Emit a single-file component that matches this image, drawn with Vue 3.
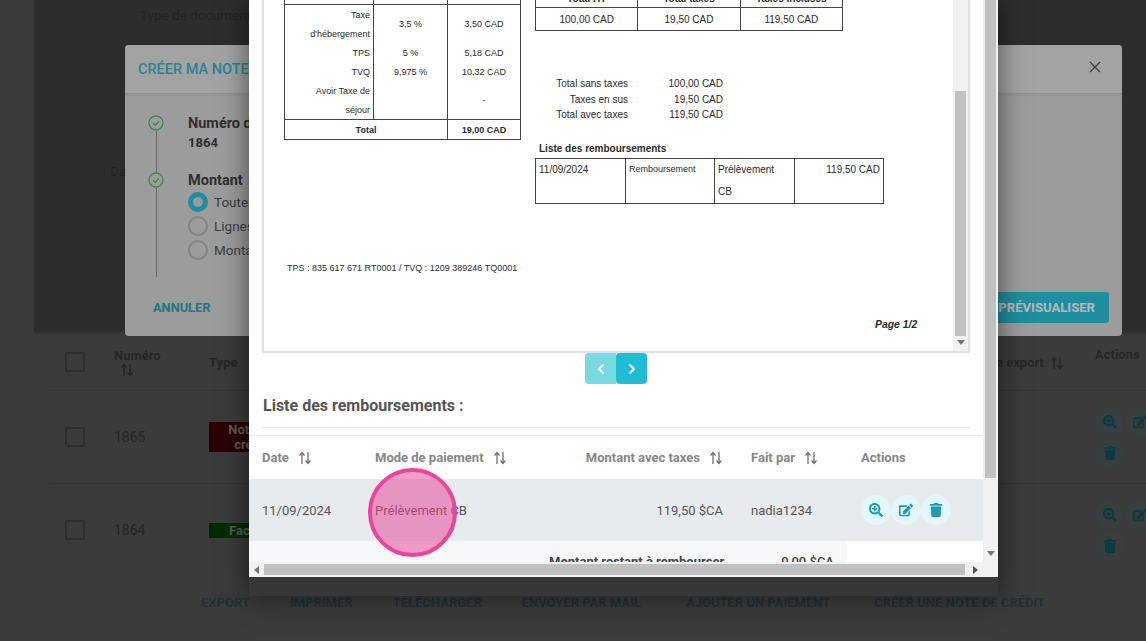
<script setup>
const taxRows = [
  { label: 'Taxe', rate: '3,5 %', amount: '3,50 CAD', span: true, label2: "d'hébergement" },
  { label: 'TPS', rate: '5 %', amount: '5,18 CAD' },
  { label: 'TVQ', rate: '9,975 %', amount: '10,32 CAD' },
  { label: 'Avoir Taxe de', label2: 'séjour', rate: '', amount: '-', span: true }
]
const totals = [
  ['Total sans taxes', '100,00 CAD'],
  ['Taxes en sus', '19,50 CAD'],
  ['Total avec taxes', '119,50 CAD']
]
const bgActions = ['EXPORT', 'IMPRIMER', 'TÉLÉCHARGER', 'ENVOYER PAR MAIL', 'AJOUTER UN PAIEMENT', 'CRÉER UNE NOTE DE CRÉDIT']
const radios = ['Toutes', 'Lignes', 'Montant']
const paths = {
  zoom: 'M304 192v32c0 6.6-5.4 12-12 12h-56v56c0 6.6-5.4 12-12 12h-32c-6.6 0-12-5.4-12-12v-56h-56c-6.6 0-12-5.4-12-12v-32c0-6.6 5.4-12 12-12h56v-56c0-6.6 5.4-12 12-12h32c6.6 0 12 5.4 12 12v56h56c6.6 0 12 5.4 12 12zm201 284.7L476.7 505c-9.4 9.4-24.6 9.4-33.9 0L343 405.3c-4.5-4.5-7-10.6-7-17V372c-35.3 27.6-79.7 44-128 44C93.1 416 0 322.9 0 208S93.1 0 208 0s208 93.1 208 208c0 48.3-16.4 92.7-44 128h16.3c6.4 0 12.5 2.5 17 7l99.7 99.7c9.3 9.4 9.3 24.6 0 34zM344 208c0-75.2-60.8-136-136-136S72 132.8 72 208s60.8 136 136 136 136-60.8 136-136z',
  edit: 'M402.6 83.2l90.2 90.2c3.8 3.8 3.8 10 0 13.8L274.4 405.6l-92.8 10.3c-12.4 1.4-22.9-9.1-21.5-21.5l10.3-92.8L388.8 83.2c3.8-3.8 10-3.8 13.8 0zm162-22.9l-48.8-48.8c-15.2-15.2-39.9-15.2-55.2 0l-35.4 35.4c-3.8 3.8-3.8 10 0 13.8l90.2 90.2c3.8 3.8 10 3.8 13.8 0l35.4-35.4c15.2-15.3 15.2-40 0-55.2zM384 346.2V448H64V128h229.8c3.2 0 6.2-1.3 8.5-3.5l40-40c7.6-7.6 2.2-20.5-8.5-20.5H48C21.5 64 0 85.5 0 112v352c0 26.5 21.5 48 48 48h352c26.5 0 48-21.5 48-48V306.2c0-10.7-12.9-16-20.5-8.5l-40 40c-2.2 2.3-3.5 5.3-3.5 8.5z',
  trash: 'M432 32H312l-9.4-18.7A24 24 0 0 0 281.1 0H166.8a23.72 23.72 0 0 0-21.4 13.3L136 32H16A16 16 0 0 0 0 48v32a16 16 0 0 0 16 16h416a16 16 0 0 0 16-16V48a16 16 0 0 0-16-16zM53.2 467a48 48 0 0 0 47.9 45h245.8a48 48 0 0 0 47.9-45L416 128H32z'
}
const actionIcons = [
  { name: 'zoom', box: '0 0 512 512' },
  { name: 'edit', box: '0 0 576 512' },
  { name: 'trash', box: '0 0 448 512' }
]
</script>

<template>
  <div class="screen">
    <!-- dimmed page -->
    <div class="page">
      <div class="page-top">
        <div class="doc-type">Type de document</div>
        <div class="doc-date">Date</div>
      </div>
      <div class="bg-row bg-head">
        <span class="bg-check"></span>
        <div class="bg-num"><b>Numéro</b>
          <svg class="sort dark" viewBox="0 0 14 14"><path d="M4 13V2M1.5 4.5 4 1.5l2.5 3M10 1v11M7.5 9.5l2.5 3 2.5-3" /></svg>
        </div>
        <div class="bg-type"><b>Type</b></div>
        <div class="bg-export"><b>Date export</b>
          <svg class="sort dark" viewBox="0 0 14 14"><path d="M4 13V2M1.5 4.5 4 1.5l2.5 3M10 1v11M7.5 9.5l2.5 3 2.5-3" /></svg>
        </div>
        <div class="bg-act-head"><b>Actions</b></div>
      </div>
      <div class="bg-row bg-line">
        <span class="bg-check"></span>
        <div class="bg-num">1865</div>
        <div class="bg-type"><span class="tag tag-red">Note de<br />crédit</span></div>
        <div class="bg-export"></div>
        <div class="bg-actions">
          <span v-for="i in actionIcons" :key="i.name" class="bg-icon"><svg :viewBox="i.box"><path :d="paths[i.name]" /></svg></span>
        </div>
      </div>
      <div class="bg-row bg-line">
        <span class="bg-check"></span>
        <div class="bg-num">1864</div>
        <div class="bg-type"><span class="tag tag-green">Facture</span></div>
        <div class="bg-export"></div>
        <div class="bg-actions">
          <span v-for="i in actionIcons" :key="i.name" class="bg-icon"><svg :viewBox="i.box"><path :d="paths[i.name]" /></svg></span>
        </div>
      </div>
      <div class="bg-buttons">
        <span v-for="a in bgActions" :key="a">{{ a }}</span>
      </div>
    </div>

    <!-- first dialog -->
    <section class="dialog">
      <header class="dialog-head">
        <span class="dialog-title">CRÉER MA NOTE DE CRÉDIT</span>
        <svg class="close" viewBox="0 0 12 12"><path d="M1 1l10 10M11 1 1 11" /></svg>
      </header>
      <div class="dialog-body">
        <div class="step">
          <div class="step-rail">
            <svg class="step-check" viewBox="0 0 16 16"><circle cx="8" cy="8" r="7" /><path d="M5 8.2l2.1 2.1L11 6.2" /></svg>
            <span class="rail-line"></span>
          </div>
          <div>
            <div class="step-title">Numéro de la note</div>
            <div class="step-value">1864</div>
          </div>
        </div>
        <div class="step step-last">
          <div class="step-rail">
            <svg class="step-check" viewBox="0 0 16 16"><circle cx="8" cy="8" r="7" /><path d="M5 8.2l2.1 2.1L11 6.2" /></svg>
            <span class="rail-line"></span>
          </div>
          <div>
            <div class="step-title">Montant</div>
            <div v-for="(r, i) in radios" :key="r" class="radio-row">
              <span class="radio" :class="{ on: i === 0 }"></span>{{ r }}
            </div>
          </div>
        </div>
      </div>
      <footer class="dialog-foot">
        <span class="cancel">ANNULER</span>
        <span class="preview">PRÉVISUALISER</span>
      </footer>
    </section>

    <!-- front modal -->
    <section class="modal">
      <div class="modal-main">
        <div class="modal-content">
          <div class="scroll-view">
            <div class="frame">
              <div class="pdf">
                <div class="pdf-left">
                  <table class="tbl tax">
                    <tbody>
                      <tr class="clip-row"><td></td><td></td><td></td></tr>
                      <template v-for="r in taxRows" :key="r.label">
                        <template v-if="r.span">
                          <tr>
                            <td class="lbl">{{ r.label }}</td>
                            <td class="ctr" rowspan="2">{{ r.rate }}</td>
                            <td class="ctr" rowspan="2">{{ r.amount }}</td>
                          </tr>
                          <tr><td class="lbl">{{ r.label2 }}</td></tr>
                        </template>
                        <tr v-else>
                          <td class="lbl">{{ r.label }}</td>
                          <td class="ctr">{{ r.rate }}</td>
                          <td class="ctr">{{ r.amount }}</td>
                        </tr>
                      </template>
                      <tr class="total-row">
                        <td colspan="2" class="ctr"><b>Total</b></td>
                        <td class="ctr"><b>19,00 CAD</b></td>
                      </tr>
                    </tbody>
                  </table>
                  <div class="tax-ids">TPS : 835 617 671 RT0001 / TVQ : 1209 389246 TQ0001</div>
                </div>
                <div class="pdf-right">
                  <table class="tbl sum">
                    <tbody>
                      <tr class="sum-head"><td><b>Total HT</b></td><td><b>Total taxes</b></td><td><b>Taxes incluses</b></td></tr>
                      <tr class="sum-row"><td>100,00 CAD</td><td>19,50 CAD</td><td>119,50 CAD</td></tr>
                    </tbody>
                  </table>
                  <div class="totals">
                    <template v-for="t in totals" :key="t[0]">
                      <span>{{ t[0] }}</span><span>{{ t[1] }}</span>
                    </template>
                  </div>
                  <div class="pdf-h">Liste des remboursements</div>
                  <table class="tbl refunds">
                    <tbody>
                      <tr>
                        <td>11/09/2024</td>
                        <td class="small">Remboursement</td>
                        <td>Prélèvement<br />CB</td>
                        <td class="right">119,50 CAD</td>
                      </tr>
                    </tbody>
                  </table>
                  <div class="page-no">Page 1/2</div>
                </div>
              </div>
              <div class="pdf-scroll">
                <span class="pdf-thumb"></span>
                <span class="arrow down"></span>
              </div>
            </div>
            <div class="pager">
              <span class="pg pg-off"><svg viewBox="0 0 8 12"><path d="M6 2 2 6l4 4" /></svg></span>
              <span class="pg pg-on"><svg viewBox="0 0 8 12"><path d="M2 2l4 4-4 4" /></svg></span>
            </div>
            <h2 class="list-title">Liste des remboursements :</h2>
            <div class="list-rule"></div>
            <div class="grid thead">
              <div class="c-date">Date<svg class="sort" viewBox="0 0 14 14"><path d="M4 13V2M1.5 4.5 4 1.5l2.5 3M10 1v11M7.5 9.5l2.5 3 2.5-3" /></svg></div>
              <div>Mode de paiement<svg class="sort" viewBox="0 0 14 14"><path d="M4 13V2M1.5 4.5 4 1.5l2.5 3M10 1v11M7.5 9.5l2.5 3 2.5-3" /></svg></div>
              <div class="c-amount">Montant avec taxes<svg class="sort" viewBox="0 0 14 14"><path d="M4 13V2M1.5 4.5 4 1.5l2.5 3M10 1v11M7.5 9.5l2.5 3 2.5-3" /></svg></div>
              <div>Fait par<svg class="sort" viewBox="0 0 14 14"><path d="M4 13V2M1.5 4.5 4 1.5l2.5 3M10 1v11M7.5 9.5l2.5 3 2.5-3" /></svg></div>
              <div>Actions</div>
            </div>
            <div class="grid tbody">
              <div class="c-date">11/09/2024</div>
              <div>Prélèvement CB</div>
              <div class="c-amount">119,50 $CA</div>
              <div>nadia1234</div>
              <div class="acts">
                <span v-for="i in actionIcons" :key="i.name" class="act"><svg :viewBox="i.box"><path :d="paths[i.name]" /></svg></span>
              </div>
            </div>
            <div class="summary">
              <span>Montant restant à rembourser</span>
              <span>0,00 $CA</span>
            </div>
          </div>
          <div class="hbar">
            <span class="arrow left"></span>
            <span class="hthumb"></span>
            <span class="arrow right"></span>
          </div>
        </div>
        <div class="vbar">
          <span class="vthumb"></span>
          <span class="arrow down"></span>
        </div>
      </div>
    </section>

    <div class="spot"></div>
  </div>
</template>

<style>
html, body { margin: 0; background: #3a3a3a; }
</style>

<style scoped>
.screen {
  position: relative;
  width: 1146px;
  height: 641px;
  overflow: hidden;
  background: #3b3b3b;
  font-family: Roboto, "Liberation Sans", sans-serif;
  color: #222;
}
.page-top {
  height: 334px;
  margin-left: 34px;
  padding: 7px 0 0 106px;
  box-sizing: border-box;
  background: #2d2d2d;
  color: #232323;
  font-size: 13.5px;
  border-bottom: 2px solid #333;
}
.doc-type { line-height: 16px; }
.doc-date { margin: 140px 0 0 -30px; line-height: 16px; }
.bg-row {
  display: grid;
  grid-template-columns: 49px 95px 1fr 200px 51px;
  align-items: center;
  margin-left: 50px;
  padding-left: 15px;
  color: #262626;
  font-size: 14px;
}
.bg-head { height: 56px; }
.bg-line { height: 92px; border-top: 1px solid #353535; }
.bg-check {
  width: 16px;
  height: 16px;
  border: 2px solid #2e2e2e;
  border-radius: 2px;
}
.bg-num b, .bg-type b, .bg-export b, .bg-act-head b { font-weight: 700; font-size: 13px; }
.bg-num b { display: block; }
.sort.dark { stroke: #262626; margin-left: 6px; }
.bg-head .bg-num .sort { display: block; }
.bg-export { justify-self: end; padding-right: 31px; white-space: nowrap; }
.bg-act-head { align-self: start; padding-top: 12px; }
.tag {
  display: inline-block;
  width: 84px;
  text-align: center;
  font-size: 13px;
  font-weight: 700;
  line-height: 15px;
  color: #5b5b5b;
  vertical-align: middle;
}
.tag-red { background: #2c0000; }
.tag-green { background: #012c01; }
.bg-actions { display: flex; flex-wrap: wrap; width: 62px; gap: 1px 0; }
.bg-icon {
  width: 30px;
  height: 30px;
  display: flex;
  align-items: center;
  justify-content: center;
  border-radius: 50%;
  background: #383d3e;
}
.bg-icon svg { width: 14px; height: 14px; fill: #0c3a42; }
.bg-buttons {
  display: flex;
  gap: 40px;
  padding: 19px 0 0 201px;
  font-size: 13px;
  font-weight: 700;
  color: #232f36;
  white-space: nowrap;
}
.bg-buttons span:nth-child(5) { margin-left: 5px; }
.bg-buttons span:nth-child(6) { margin-left: 4px; }

.dialog {
  position: absolute;
  left: 125px;
  top: 45px;
  width: 997px;
  height: 291px;
  display: flex;
  flex-direction: column;
  border-radius: 4px;
  background: #9c9c9c;
  overflow: hidden;
}
.dialog-head {
  height: 48px;
  flex: none;
  display: flex;
  align-items: center;
  justify-content: space-between;
  padding: 0 21px 4px 13px;
  box-sizing: border-box;
  background: #a3a3a3;
  box-shadow: 0 1px 3px rgba(0, 0, 0, .12);
}
.dialog-title { font-size: 14.5px; font-weight: 500; color: #2a8391; margin-top: 4px; }
.close { width: 12px; height: 12px; stroke: #3f3f3f; stroke-width: 1.3; fill: none; }
.dialog-body { flex: 1; padding: 22px 0 0 23px; color: #2f2f2f; }
.step { display: flex; gap: 24px; height: 57px; }
.step-last { height: 105px; }
.step-rail { width: 16px; display: flex; flex-direction: column; align-items: center; }
.step-check { width: 16px; height: 16px; flex: none; fill: none; stroke: #3b8a4a; stroke-width: 1.3; }
.rail-line { width: 1px; flex: 1; background: #6a6a6a; }
.step-title { font-size: 14.5px; font-weight: 700; line-height: 16px; padding-top: 1px; white-space: nowrap; }
.step-value { font-size: 13px; font-weight: 700; margin-top: 3px; line-height: 16px; }
.radio-row {
  display: flex;
  align-items: center;
  gap: 6px;
  height: 24px;
  font-size: 13.5px;
  color: #3c3c3c;
}
.step-last .step-title { margin-bottom: 1px; }
.radio {
  width: 16px;
  height: 16px;
  border: 2px solid #838383;
  border-radius: 50%;
}
.radio.on { width: 10px; height: 10px; border: 5px solid #1f8e9f; }
.dialog-foot {
  display: flex;
  justify-content: space-between;
  align-items: center;
  padding: 0 13px 13px 28px;
  font-size: 12.8px;
  font-weight: 700;
}
.cancel { color: #1e7686; }
.preview {
  display: block;
  padding: 0 14px 0 120px;
  font-size: 13.1px;
  line-height: 31px;
  border-radius: 3px;
  background: #1f8e9f;
  color: #b9b9b9;
}

.modal {
  position: absolute;
  left: 249px;
  top: 0;
  width: 749px;
  height: 596px;
  background: #373737;
  box-shadow: 0 0 26px rgba(0, 0, 0, .55);
}
.modal-main { display: flex; height: 577px; background: #fff; }
.modal-content { width: 734px; display: flex; flex-direction: column; }
.scroll-view { height: 562px; overflow: hidden; }
.frame {
  display: flex;
  width: 708px;
  height: 353px;
  margin-left: 13px;
  box-sizing: border-box;
  border: 2px solid #e2e2e2;
  border-top: 0;
}
.pdf {
  display: flex;
  flex: 1;
  overflow: hidden;
  font-family: "Liberation Sans", Arial, sans-serif;
  font-size: 10px;
  color: #2a2a2a;
}
.pdf-left { width: 271px; flex: none; padding-left: 20px; box-sizing: border-box; }
.pdf-right { flex: 1; }
.tbl { border-collapse: collapse; table-layout: fixed; }
.tbl td { border: 1px solid #444; padding: 0; }
.tax { width: 237px; margin-top: -15px; font-size: 9px; }
.tax td { height: 19px; line-height: 18px; border-top: 0; border-bottom: 0; }
.tax tr:nth-child(2) td { height: 20px; }
.tax td:nth-child(1) { width: 88px; }
.tax td:nth-child(2) { width: 73px; }
.tax .clip-row td { border-bottom: 1px solid #444; }
.tax .lbl { text-align: right; padding-right: 3px; box-sizing: border-box; }
.ctr { text-align: center; }
.tax .total-row td { border-top: 1px solid #444; border-bottom: 1px solid #444; line-height: 16px; }
.tax-ids { margin-top: 121px; margin-left: 3px; font-size: 9px; line-height: 14px; white-space: nowrap; }
.sum { width: 308px; margin-top: -15px; text-align: center; }
.sum-head td { height: 19px; padding-bottom: 2px; vertical-align: bottom; line-height: 12px; }
.sum-row td { height: 22px; }
.totals {
  display: grid;
  grid-template-columns: 93px 95px;
  margin-top: 45px;
  text-align: right;
  line-height: 15.5px;
}
.pdf-h { margin: 19px 0 0 4px; font-weight: 700; line-height: 14px; }
.refunds { width: 349px; margin-top: 2px; }
.refunds td { vertical-align: top; line-height: 22px; padding: 0 3px; height: 44px; box-sizing: border-box; }
.refunds td:nth-child(1) { width: 90px; }
.refunds td:nth-child(2) { width: 89px; }
.refunds td:nth-child(3) { width: 80px; }
.refunds .small { font-size: 9px; line-height: 20px; }
.refunds .right { text-align: right; }
.page-no { margin: 114px 0 0 340px; font-size: 10.4px; font-weight: 700; font-style: italic; line-height: 14px; }
.pdf-scroll {
  width: 15px;
  flex: none;
  display: flex;
  flex-direction: column;
  align-items: center;
  background: #f1f1f1;
}
.pdf-thumb { width: 11px; height: 245px; margin-top: 91px; background: #c1c1c1; }
.pdf-scroll .down { margin-top: 4px; }

.arrow { width: 0; height: 0; display: block; border: 4px solid transparent; }
.arrow.down { border-top: 5px solid #757575; border-bottom: 0; }
.arrow.left { border-right: 5px solid #757575; border-left: 0; }
.arrow.right { border-left: 5px solid #505050; border-right: 0; }

.pager { display: flex; justify-content: center; }
.pg { width: 31px; height: 31px; display: flex; align-items: center; justify-content: center; }
.pg svg { width: 8px; height: 12px; fill: none; stroke: #fff; stroke-width: 2; stroke-linecap: round; stroke-linejoin: round; }
.pg-off { background: #7ad8e5; border-radius: 4px 0 0 4px; }
.pg-on { background: #21bcd3; border-radius: 4px; }
.list-title {
  margin: 12px 0 0 14px;
  font-size: 16px;
  line-height: 19px;
  font-weight: 700;
  color: #555;
}
.list-rule { margin: 12px 13px 0 13px; height: 1px; background: #ebebeb; }
.grid {
  display: grid;
  grid-template-columns: 126px 170px 206px 110px 122px;
  align-items: center;
}
.thead {
  height: 44px;
  margin-top: 7px;
  border-top: 1px solid #ebebeb;
  box-sizing: border-box;
  font-size: 13px;
  font-weight: 700;
  color: #868686;
}
.c-date { padding-left: 13px; }
.c-amount { text-align: right; padding-right: 28px; }
.sort {
  width: 14px;
  height: 14px;
  margin-left: 9px;
  vertical-align: -3px;
  fill: none;
  stroke: #6f6f6f;
  stroke-width: 1.3;
}
.tbody {
  height: 62px;
  background: #e8ebee;
  font-size: 13px;
  color: #555;
}
.acts { display: flex; }
.act {
  width: 30px;
  height: 30px;
  display: flex;
  align-items: center;
  justify-content: center;
  border-radius: 50%;
  background: #e3f6f9;
}
.act svg { width: 14px; height: 14px; fill: #1a9bb0; }
.summary {
  display: flex;
  justify-content: flex-end;
  gap: 57px;
  width: 598px;
  height: 30px;
  padding: 13px 13px 0 0;
  box-sizing: border-box;
  background: #f5f7f9;
  font-size: 13px;
  line-height: 15px;
  font-weight: 700;
  color: #444;
}
.summary span:last-child { font-weight: 500; }
.hbar {
  height: 15px;
  display: flex;
  align-items: center;
  padding: 0 3px;
  box-sizing: border-box;
  background: #f1f1f1;
}
.hbar .left { margin-left: 2px; }
.hthumb { width: 701px; height: 11px; margin-left: 5px; background: #c1c1c1; }
.hbar .right { margin-left: 8px; }
.vbar {
  width: 15px;
  display: flex;
  flex-direction: column;
  align-items: center;
  background: #f1f1f1;
}
.vthumb { width: 11px; height: 478px; background: #c1c1c1; }
.vbar .down { margin-top: 73px; }

.spot {
  position: absolute;
  left: 368px;
  top: 468px;
  width: 89px;
  height: 89px;
  box-sizing: border-box;
  border-radius: 50%;
  border: 4px solid #e8459b;
  background: rgba(232, 69, 150, .52);
}
</style>
